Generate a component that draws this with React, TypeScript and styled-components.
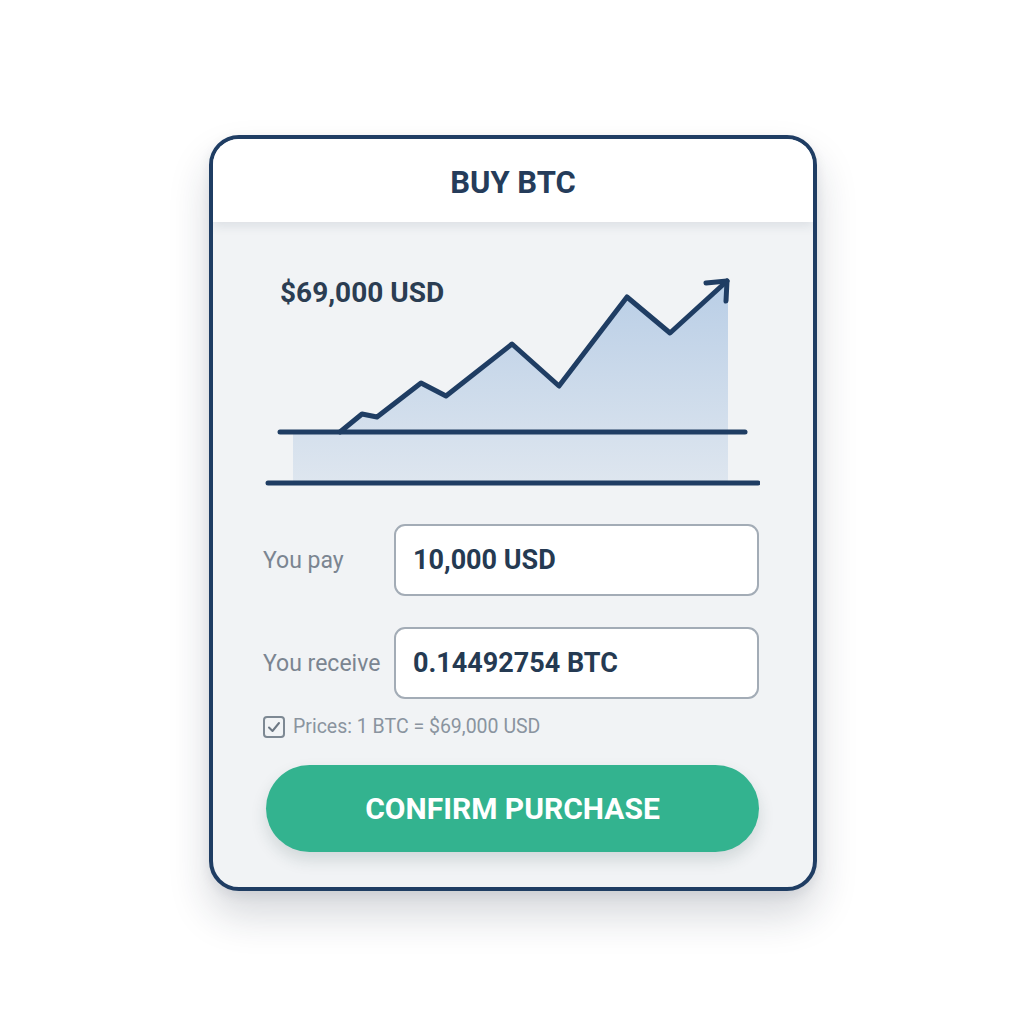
import React from "react";
import styled, { createGlobalStyle } from "styled-components";

const Global = createGlobalStyle`
  html, body { margin: 0; padding: 0; background: #ffffff; }
  body { font-family: Roboto, "Noto Sans", "Liberation Sans", sans-serif; }
`;

const Page = styled.div`
  width: 1024px;
  height: 1024px;
  padding: 135px 0 0 209px;
  box-sizing: border-box;
`;

const Card = styled.div`
  width: 608px;
  height: 756px;
  box-sizing: border-box;
  border: 4px solid #1f3d63;
  border-radius: 30px;
  background: #f1f3f5;
  overflow: hidden;
  display: flex;
  flex-direction: column;
  box-shadow: 0 24px 40px rgba(30, 40, 60, 0.18), 0 4px 12px rgba(30, 40, 60, 0.08);
`;

const Header = styled.div`
  height: 83px;
  flex: none;
  background: #ffffff;
  display: flex;
  align-items: center;
  justify-content: center;
  padding-top: 4px;
  box-sizing: border-box;
  position: relative;
  z-index: 1;
  box-shadow: 0 4px 10px rgba(40, 60, 90, 0.1);
  font-size: 31px;
  font-weight: 700;
  color: #253c5a;
`;

const Body = styled.div`
  flex: 1;
  display: flex;
  flex-direction: column;
  padding: 40px 53px 0 50px;
`;

const ChartWrap = styled.div`
  position: relative;
  width: 497px;
  height: 230px;
`;

const Price = styled.div`
  position: absolute;
  left: 17px;
  top: 14px;
  font-size: 28px;
  font-weight: 700;
  color: #2b3d52;
`;

const Fields = styled.div`
  margin-top: 32px;
  display: grid;
  grid-template-columns: 131px 365px;
  row-gap: 31px;
  align-items: center;
`;

const Label = styled.div`
  font-size: 23px;
  color: #7b8591;
`;

const Input = styled.div`
  height: 72px;
  box-sizing: border-box;
  border: 2px solid #a3acb6;
  border-radius: 11px;
  background: #ffffff;
  display: flex;
  align-items: center;
  padding-left: 17px;
  font-size: 27px;
  font-weight: 700;
  color: #253a52;
`;

const Note = styled.div`
  margin-top: 16px;
  display: flex;
  align-items: center;
  gap: 8px;
  font-size: 19.5px;
  color: #8a949f;
`;

const Check = styled.div`
  width: 22px;
  height: 22px;
  box-sizing: border-box;
  border: 2px solid #7d8893;
  border-radius: 4px;
  display: flex;
  align-items: center;
  justify-content: center;
`;

const Button = styled.button`
  margin-top: 27px;
  margin-left: 3px;
  width: 493px;
  height: 87px;
  border: none;
  border-radius: 44px;
  background: #33b38f;
  color: #ffffff;
  font-family: inherit;
  font-size: 30px;
  font-weight: 700;
  box-shadow: 0 8px 16px rgba(30, 60, 60, 0.15);
`;

const linePts: [number, number][] = [
  [340, 432],
  [362, 414],
  [377, 417],
  [421, 383],
  [446, 396],
  [512, 344],
  [559, 386],
  [627, 297],
  [670, 333],
  [727, 281],
];

export default function App() {
  const line = linePts.map((p) => p.join(",")).join(" ");
  const fill = `293,432 ${line} 728,281 728,483 293,483`;
  return (
    <>
      <Global />
      <Page>
        <Card>
          <Header>BUY BTC</Header>
          <Body>
            <ChartWrap>
              <svg width="497" height="230" viewBox="263 262 497 230">
                <defs>
                  <linearGradient id="g" x1="0" y1="0" x2="0" y2="1">
                    <stop offset="0" stopColor="#b9cee6" />
                    <stop offset="1" stopColor="#dee6ef" />
                  </linearGradient>
                </defs>
                <polygon points={fill} fill="url(#g)" />
                <line x1="280" y1="432" x2="745" y2="432" stroke="#1f3d63" strokeWidth="5" strokeLinecap="round" />
                <line x1="268" y1="483" x2="758" y2="483" stroke="#1f3d63" strokeWidth="5" strokeLinecap="round" />
                <polyline points={line} fill="none" stroke="#1f3d63" strokeWidth="5" strokeLinejoin="round" strokeLinecap="round" />
                <polyline points="706,283 727,281 726,301" fill="none" stroke="#1f3d63" strokeWidth="5" strokeLinejoin="round" strokeLinecap="round" />
              </svg>
              <Price>$69,000 USD</Price>
            </ChartWrap>
            <Fields>
              <Label>You pay</Label>
              <Input>10,000 USD</Input>
              <Label>You receive</Label>
              <Input>0.14492754 BTC</Input>
            </Fields>
            <Note>
              <Check>
                <svg width="14" height="14" viewBox="0 0 14 14">
                  <polyline points="2,7.5 5.5,11 12,3" fill="none" stroke="#6d7884" strokeWidth="2" strokeLinecap="round" strokeLinejoin="round" />
                </svg>
              </Check>
              Prices: 1 BTC = $69,000 USD
            </Note>
            <Button>CONFIRM PURCHASE</Button>
          </Body>
        </Card>
      </Page>
    </>
  );
}
